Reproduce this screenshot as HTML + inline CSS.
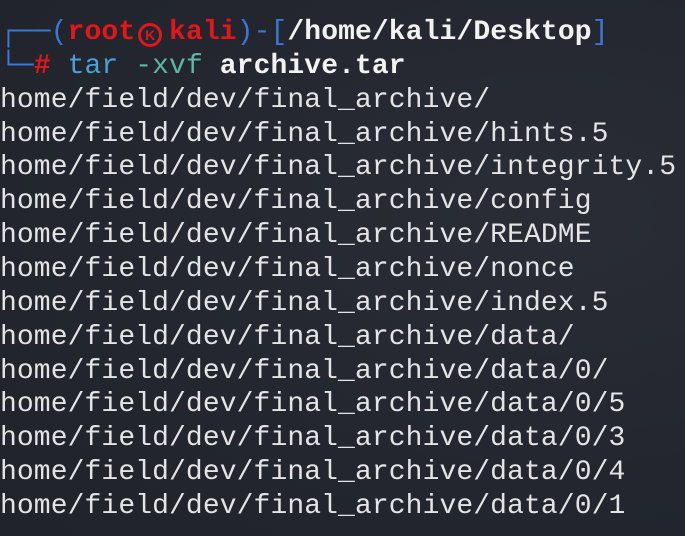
<!DOCTYPE html>
<html><head><meta charset="utf-8"><style>
html,body{margin:0;padding:0;background:#23262e;width:685px;height:536px;overflow:hidden}
body{background:radial-gradient(ellipse at 80% 40%,#2a2d35 0%,#23262e 60%,#202329 100%)}
pre{margin:0;position:absolute;left:0;top:16px;font-family:"Liberation Mono","DejaVu Sans Mono",monospace;font-size:28px;line-height:33.86px;color:#e4e4e6;letter-spacing:0.1px}
.b{color:#3a78d8}.r{color:#e3161c;font-weight:bold}.w{color:#f2f2f2;font-weight:bold}
.c{color:#4aa0d8}.t{color:#5cb8a4}
.kw{display:inline-block;width:33.8px;text-align:left}
.k{display:inline-block;margin-left:3px;width:24px;height:24px;border:3px solid #e3161c;border-radius:50%;box-sizing:border-box;font-size:14px;line-height:18px;text-align:center;vertical-align:-1px;font-weight:bold;color:#e3161c;font-family:"Liberation Sans",sans-serif}
</style></head><body><pre><span class="b">┌──(</span><span class="r">root</span><span class="kw"><span class="k">K</span></span><span class="r">kali</span><span class="b">)-[</span><span class="w">/home/kali/Desktop</span><span class="b">]</span>
<span class="b">└─</span><span class="r">#</span> <span class="c">tar</span> <span class="t">-xvf</span> <span class="w">archive.tar</span>
home/field/dev/final_archive/
home/field/dev/final_archive/hints.5
home/field/dev/final_archive/integrity.5
home/field/dev/final_archive/config
home/field/dev/final_archive/README
home/field/dev/final_archive/nonce
home/field/dev/final_archive/index.5
home/field/dev/final_archive/data/
home/field/dev/final_archive/data/0/
home/field/dev/final_archive/data/0/5
home/field/dev/final_archive/data/0/3
home/field/dev/final_archive/data/0/4
home/field/dev/final_archive/data/0/1</pre></body></html>
